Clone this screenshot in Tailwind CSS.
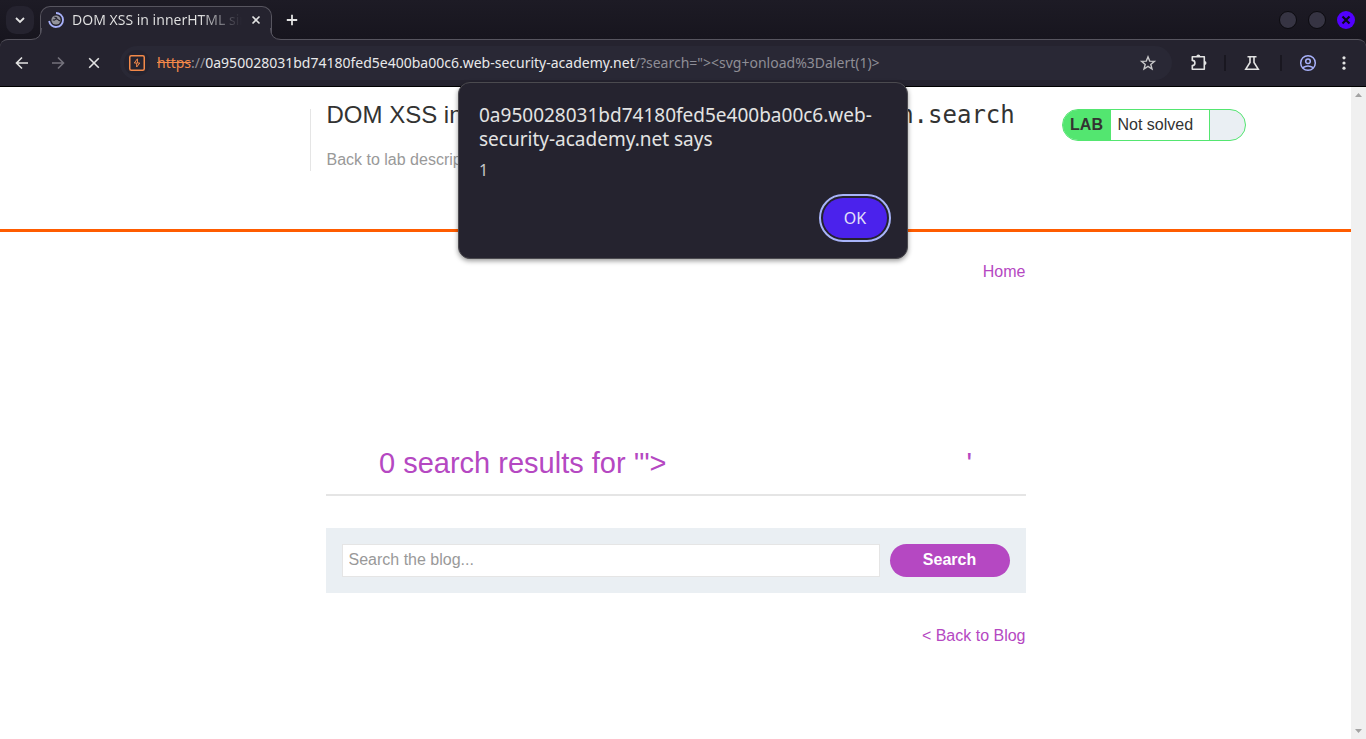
<!DOCTYPE html>
<html lang="en">
<head>
<meta charset="utf-8">
<title>DOM XSS in innerHTML sink using source location.search</title>
<script src="https://cdn.jsdelivr.net/npm/@tailwindcss/browser@4"></script>
</head>
<body class="relative flex h-screen flex-col overflow-hidden bg-white font-['Liberation_Sans',Arial,sans-serif] text-base text-[#333332]">

<header class="shrink-0 bg-[#191720] font-['Noto_Sans',sans-serif] text-[#e3e3e3]">
  <div class="flex h-10 items-end bg-linear-to-b from-[#1d1b25] to-[#17151e] pr-[11px]">
    <button aria-label="Search tabs" class="mb-1.5 ml-1.5 flex size-7 items-center justify-center rounded-[10px] bg-[#25232f]">
      <svg class="size-4" viewBox="0 0 16 16" fill="none" stroke="#e3e3e3" stroke-width="1.800"><path d="M4 6l4 4 4-4"/></svg>
    </button>
    <div class="relative z-10 ml-1.5 flex h-[34px] w-[232px] items-center rounded-t-[10px] border border-b-0 border-[#57555f] bg-[#25232f] px-[7px] pb-2">
      <svg class="absolute bottom-0 -left-3 h-3 w-[13px]" viewBox="0 0 13 12"><path d="M13 0V12H0V11.5Q12.500 11.500 12.500 0Z" fill="#25232f"/><path d="M0 11.500H2Q12.500 11.500 12.500 0" fill="none" stroke="#57555f"/></svg>
      <svg class="absolute -right-3 bottom-0 h-3 w-[13px]" viewBox="0 0 13 12"><path d="M0 0V12H13V11.500Q.5 11.500 .5 0Z" fill="#25232f"/><path d="M13 11.500H11Q.5 11.500 .5 0" fill="none" stroke="#57555f"/></svg>
      <svg class="size-4 shrink-0" viewBox="0 0 16 16" fill="none"><circle cx="8" cy="8" r="4.600" fill="#94949c"/><path d="M4.800 7.800q1.600.8 2.600-.4t2.600.3 2 .6M6.500 4.800q.8 1.400 2.600.8" stroke="#25232f" stroke-width="1.100"/><path d="M8 1a7 7 0 1 1-6.900 8" stroke="#a8b1fa" stroke-width="1.800"/></svg>
      <span class="ml-2 min-w-0 flex-1 overflow-hidden bg-linear-to-r from-[#e3e3e3] from-75% to-[#25232f] bg-clip-text text-sm leading-5 whitespace-nowrap text-transparent">DOM XSS in innerHTML sink</span>
      <button aria-label="Close tab" class="ml-1.5 flex size-4 items-center justify-center">
        <svg class="size-4" viewBox="0 0 16 16" stroke="#e3e3e3" stroke-width="1.600"><path d="M4.500 4.500l7 7M11.500 4.500l-7 7"/></svg>
      </button>
    </div>
    <button aria-label="New tab" class="mb-3 ml-3 flex size-4 items-center justify-center">
      <svg class="size-4" viewBox="0 0 16 16" stroke="#e3e3e3" stroke-width="1.800"><path d="M8 2.800v10.400M2.800 8h10.400"/></svg>
    </button>
    <div class="mb-[11px] ml-auto flex items-center gap-[11px]">
      <button aria-label="Minimize" class="size-[18px] rounded-full border border-[#0b0a0f] bg-[#363443]"></button>
      <button aria-label="Maximize" class="size-[18px] rounded-full border border-[#0b0a0f] bg-[#363443]"></button>
      <button aria-label="Close window" class="flex size-[18px] items-center justify-center rounded-full bg-[#5200ff]">
        <svg class="size-[18px]" viewBox="0 0 18 18" stroke="#0b0820" stroke-width="2.200"><path d="M5.500 5.500l7 7M12.500 5.500l-7 7"/></svg>
      </button>
    </div>
  </div>
  <div class="-mt-px flex h-12 items-center rounded-t-lg border-t border-b border-t-[#57555f] border-b-black bg-[#25232f] px-3">
    <button aria-label="Back"><svg class="size-5" viewBox="0 0 20 20" fill="none" stroke="#e3e3e3" stroke-width="1.600"><path d="M16 10H5M10 4.500L4.500 10l5.500 5.500"/></svg></button>
    <button aria-label="Forward" class="ml-4"><svg class="size-5" viewBox="0 0 20 20" fill="none" stroke="#74727c" stroke-width="1.600"><path d="M4 10h11M10 4.500L15.500 10 10 15.500"/></svg></button>
    <button aria-label="Stop" class="ml-4"><svg class="size-5" viewBox="0 0 20 20" stroke="#e3e3e3" stroke-width="1.600"><path d="M5.200 5.200l9.600 9.600M14.800 5.200l-9.600 9.600"/></svg></button>
    <div class="ml-4 flex h-[34px] flex-1 items-center rounded-full bg-[#292835] pr-3.5 pl-1">
      <button aria-label="Site information" class="flex size-[26px] items-center justify-center rounded-full bg-[#25232f]">
        <svg class="size-4" viewBox="0 0 16 16" fill="none" stroke="#f38949"><rect x=".75" y=".75" width="14.500" height="14.500" rx="1.500" stroke-width="1.500"/><path d="M8.400 3.800L5.300 8h2.400v4M8.400 3.800V8h2.400L7.700 12" stroke-width="1"/></svg>
      </button>
      <div class="ml-[7px] flex-1 text-sm leading-5 whitespace-nowrap text-[#8f8e96]"><span class="text-[#f38949] line-through">https</span>://<span class="text-[#e8e8ea]">0a950028031bd74180fed5e400ba00c6.web-security-academy.net</span>/?search="&gt;&lt;svg+onload%3Dalert(1)&gt;</div>
      <button aria-label="Bookmark this page"><svg class="size-5" viewBox="0 0 20 20" fill="none" stroke="#c7c7c9" stroke-width="1.400"><path d="M10 3.800l1.700 4.300 4.700.3-3.600 3 1.200 4.600-4-2.600-4 2.600 1.200-4.600-3.600-3 4.700-.3z"/></svg></button>
    </div>
    <button aria-label="Extensions" class="ml-4"><svg class="size-5" viewBox="0 0 20 20" fill="none"><path d="M4.300 3.800h12v12.400h-12v-3.600a2.600 2.600 0 0 0 0-5.200z" stroke="#e3e3e3" stroke-width="1.600" stroke-linejoin="round"/><path d="M8.300 3.500a2 2 0 0 1 4 0zM16.500 8a2 2 0 0 1 0 4z" fill="#e3e3e3"/></svg></button>
    <span class="ml-4 h-4 w-0.5 bg-[#191720]"></span>
    <button aria-label="Labs" class="ml-4"><svg class="size-5" viewBox="0 0 20 20" fill="none" stroke="#e3e3e3" stroke-width="1.600"><path d="M5.500 3.800h9M8 4v5.500L3.800 16.200h12.400L12 9.500V4"/></svg></button>
    <span class="ml-[18px] h-4 w-0.5 bg-[#191720]"></span>
    <button aria-label="Profile" class="ml-4"><svg class="size-5" viewBox="0 0 20 20" fill="none" stroke="#a8b1fa" stroke-width="1.500"><circle cx="10" cy="10" r="7.300"/><circle cx="10" cy="8.200" r="2.300"/><path d="M4.800 14.700q5.200-3.600 10.400 0"/></svg></button>
    <button aria-label="Browser menu" class="ml-4"><svg class="size-5" viewBox="0 0 20 20" fill="#e3e3e3"><circle cx="10" cy="4.800" r="1.600"/><circle cx="10" cy="10" r="1.600"/><circle cx="10" cy="15.200" r="1.600"/></svg></button>
  </div>
</header>

<div class="flex min-h-0 flex-1">
  <div class="min-w-0 flex-1">
    <section class="border-b-[3px] border-[#ff5c00]">
      <div class="mx-auto flex h-[142px] max-w-[1140px] items-start pt-[22px]">
        <div class="ml-[204px] h-[62px] flex-1 border-l border-[#e5e5e5] pl-4">
          <h2 class="-mt-2 text-2xl leading-7 whitespace-nowrap">DOM XSS in <code class="font-['DejaVu_Sans_Mono',monospace]">innerHTML</code> sink using source <code class="font-['DejaVu_Sans_Mono',monospace]">location.search</code></h2>
          <a href="#" class="mt-[19px] block text-[#999]">Back to lab description »</a>
        </div>
        <div class="flex h-8 w-[184px] overflow-hidden rounded-[16px] border border-[#53e670] bg-[#eaeff3] leading-[30px]">
          <span class="w-12 bg-[#53e670] text-center font-bold">LAB</span>
          <p class="w-[99px] border-r border-[#53e670] bg-white pl-[7px]">Not solved</p>
        </div>
      </div>
    </section>

    <main class="mx-auto w-full max-w-[700px] pt-7 text-[#b548c2]">
      <nav class="text-right leading-6"><a href="#">Home</a></nav>
      <section class="mt-[156px] flex h-[56px] items-start justify-center border-b-2 border-[#e5e5e5]">
        <h1 class="flex text-[29px] leading-[46px] whitespace-pre"><span>0 search results for '</span><span>"&gt;<svg class="inline-block h-10 w-[300px]"></svg></span><span>'</span></h1>
      </section>
      <form class="mt-8 flex gap-2.5 bg-[#eaeff3] p-4">
        <input type="text" aria-label="Search the blog" placeholder="Search the blog..." class="h-[33px] min-w-0 flex-1 border border-[#e5e5e5] bg-white px-1.5 pb-0.5 text-base text-[#333332] placeholder:text-[#999]">
        <button type="button" class="h-[33px] w-[120px] rounded-full bg-[#b548c2] pb-0.5 font-bold text-white">Search</button>
      </form>
      <div class="mt-[31px] text-right leading-6"><a href="#">&lt; Back to Blog</a></div>
    </main>
  </div>
  <div class="flex w-[15px] flex-col items-center justify-between bg-[#f0f0f0] py-1.5" aria-hidden="true">
    <svg class="h-1 w-[7px]" viewBox="0 0 7 4" fill="#a3a3a3"><path d="M0 4L3.500 0 7 4z"/></svg>
    <svg class="h-1 w-[7px]" viewBox="0 0 7 4" fill="#a3a3a3"><path d="M0 0L3.500 4 7 0z"/></svg>
  </div>
</div>

<div role="dialog" aria-labelledby="dialog-title" class="absolute top-[82px] left-1/2 z-20 w-[450px] -translate-x-1/2 rounded-xl border border-[#4b4a4f] bg-[#25232f] px-5 pt-5 pb-5 font-['Noto_Sans',sans-serif] text-[#e3e3e3] shadow-[0_2px_5px_rgba(0,0,0,0.4)]">
  <h2 id="dialog-title" class="text-[19px] leading-6">0a950028031bd74180fed5e400ba00c6.web-<br>security-academy.net says</h2>
  <p class="mt-[7px] leading-6 text-[#c7c7c9]">1</p>
  <div class="mt-4 flex justify-end">
    <button class="h-10 w-16 rounded-full bg-[#4b22ec] text-base text-[#e3e0fa] outline-2 outline-offset-2 outline-[#a8b4fa]">OK</button>
  </div>
</div>
</body>
</html>
